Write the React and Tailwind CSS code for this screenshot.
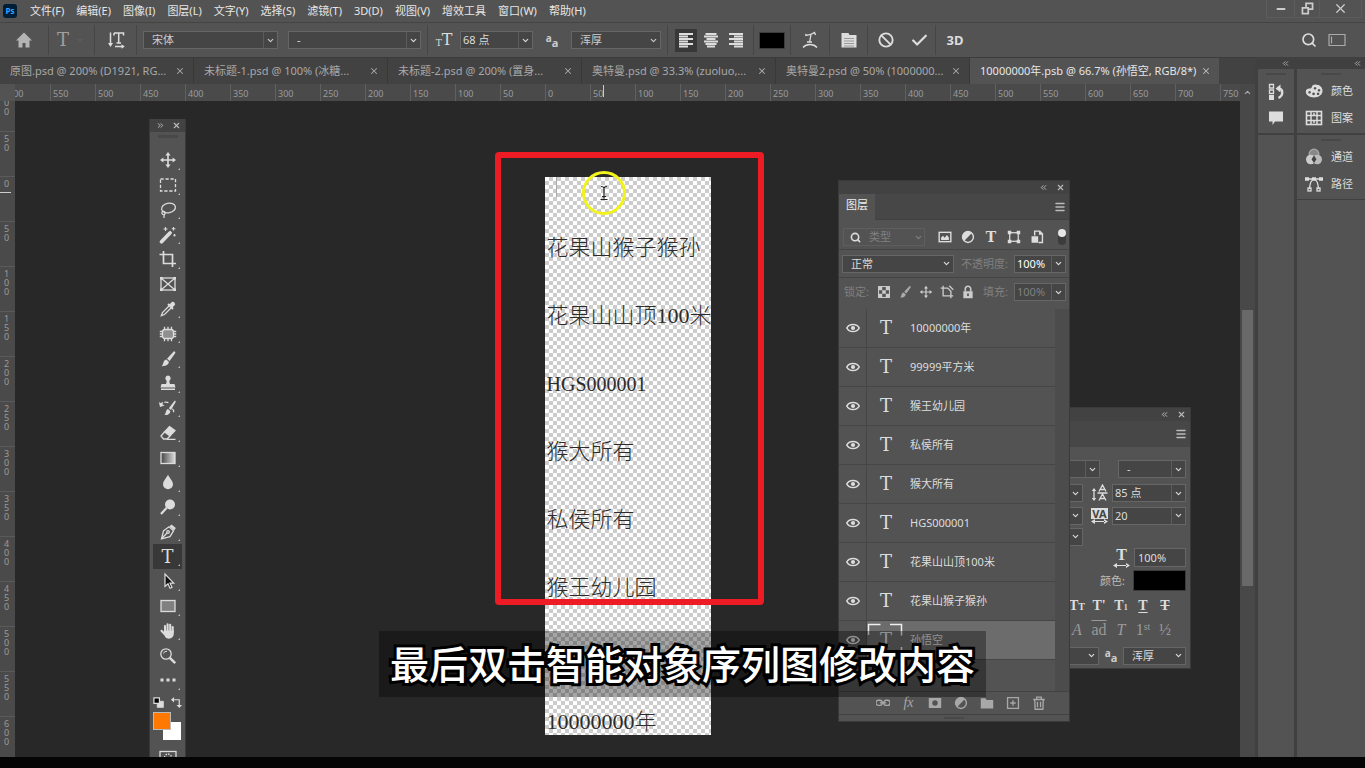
import { ChevronDown, ChevronUp, ChevronsLeft, ChevronsRight, X, Menu, Search, Check, Ban, Minus } from "lucide-react";

const menus = ["文件(F)", "编辑(E)", "图像(I)", "图层(L)", "文字(Y)", "选择(S)", "滤镜(T)", "3D(D)", "视图(V)", "增效工具", "窗口(W)", "帮助(H)"];

const tabs = [
  "原图.psd @ 200% (D1921, RG...",
  "未标题-1.psd @ 100% (冰糖...",
  "未标题-2.psd @ 200% (置身...",
  "奥特曼.psd @ 33.3% (zuoluo,...",
  "奥特曼2.psd @ 50% (1000000...",
];

const topTicks = [600, 550, 500, 450, 400, 350, 300, 250, 200, 150, 100, 50, 0, 50, 100, 150, 200, 250, 300, 350, 400, 450, 500, 550, 600, 650, 700, 750];
const sideTicks = ["100", "50", "0", "50", "100", "150", "200", "250", "300", "350", "400", "450", "500", "550", "600"];

const artText = ["花果山猴子猴孙", "花果山山顶100米", "HGS000001", "猴大所有", "私侯所有", "猴王幼儿园"];

const layers = ["10000000年", "99999平方米", "猴王幼儿园", "私侯所有", "猴大所有", "HGS000001", "花果山山顶100米", "花果山猴子猴孙", "孙悟空"];

function Svg({ size = 18, className = "", children }) {
  return (
    <svg width={size} height={size} viewBox="0 0 18 18" fill="none" stroke="currentColor" strokeWidth="1.3" className={`shrink-0 ${className}`} aria-hidden="true">
      {children}
    </svg>
  );
}

function Serif({ className = "", children }) {
  return <span className={`font-['Liberation_Serif',serif] font-bold leading-none ${className}`}>{children}</span>;
}

// Type tool mark, a slab letter
function TypeMark({ className = "" }) {
  return <span className={`font-['DejaVu_Serif',serif] leading-none ${className}`}>T</span>;
}

const MoveIcon = ({ size }) => (
  <Svg size={size}>
    <path d="M9 3v12M3 9h12" strokeWidth="1.6" />
    <path d="M9 1l2.6 3.4H6.4zM9 17l2.6-3.4H6.4zM1 9l3.4-2.6v5.2zM17 9l-3.4-2.6v5.2z" fill="currentColor" stroke="none" />
  </Svg>
);

const BrushIcon = ({ size }) => (
  <Svg size={size}>
    <path d="M15.6 1.4c1 .6.9 1.2.4 2L10.6 11 8 8.8l6-6.6c.6-.8 1-1.1 1.6-.8z" fill="currentColor" stroke="none" />
    <path d="M7.3 9.6l2.5 2.200c.2 2.500-2.600 4.600-7.300 4.400 1.800-1.200 1.400-2.800 2.200-4.400.6-1.300 1.500-2 2.600-2.200z" fill="currentColor" stroke="none" />
  </Svg>
);

const tools = [
  { name: "移动工具", icon: <MoveIcon /> },
  { name: "矩形选框工具", icon: <Svg><rect x="1.5" y="3" width="15" height="12" strokeDasharray="3.2 1.8" /></Svg> },
  { name: "套索工具", icon: <Svg><ellipse cx="9.5" cy="7" rx="7" ry="4.8" transform="rotate(-12 9.5 7)" /><circle cx="4.5" cy="12" r="1.6" /><path d="M5 13.5c.6 1 .4 2-.4 3.3" /></Svg> },
  { name: "魔棒工具", icon: <Svg><path d="M2.5 15.8l8.2-8.6" strokeWidth="3.6" strokeLinecap="round" /><path d="M11 6.8l1.2-1.2" strokeWidth="2.6" /><path d="M6.5 1v4M4.500 3h4M14.500 1v3.600M12.800 2.800h3.600M15.500 8v2.400M14.300 9.200h2.400" strokeWidth="1.1" /></Svg> },
  { name: "裁剪工具", icon: <Svg><path d="M4.5 1v12.500H17M0.500 4.500h13V17" strokeWidth="1.7" /></Svg> },
  { name: "图框工具", noMore: true, icon: <Svg><rect x="2" y="3" width="14" height="12" /><path d="M2 3l14 12M16 3L2 15" /><path d="M1 2h2.500v2.500H1zM14.500 2H17v2.500h-2.500zM1 13.500h2.500V16H1zM14.500 13.500H17V16h-2.500z" fill="currentColor" stroke="none" /></Svg> },
  { name: "吸管工具", icon: <Svg><path d="M10 6L3.500 12.500 2.300 15.700l3.200-1.200L12 8" /><path d="M8.300 4.700l5 5 1.400-1.400-1-1 2.200-2.300c1-1-1.500-4-3-2.900l-2.300 2.200-.9-1z" fill="currentColor" stroke="none" /></Svg> },
  { name: "修复工具", icon: <Svg><rect x="3.5" y="4.5" width="11" height="9" rx="2.5" fill="#8f8f8f" /><path d="M5.500 4V1.800M9 4V1.800M12.500 4V1.800M5.500 14v2.200M9 14v2.200M12.500 14v2.200M3 6.500H.8M3 9H.8M3 11.500H.8M15 6.500h2.200M15 9h2.200M15 11.500h2.200" /></Svg> },
  { name: "画笔工具", icon: <BrushIcon /> },
  { name: "仿制图章工具", icon: <Svg><path d="M9 1.500a2.800 2.800 0 0 1 1.600 5c-.5.600-.1 2.500.4 3.500h4.500l1 3.500h-15l1-3.500H7c.5-1 .9-2.900.4-3.500A2.800 2.800 0 0 1 9 1.500zM2 14.500h14V16H2z" fill="currentColor" stroke="none" /></Svg> },
  { name: "历史记录画笔工具", icon: <Svg><path d="M16 1.500c.9.500.8 1.200.4 1.900L12 11 9.800 9.300 15 2.500zM9 10l2.300 1.900c.1 2.400-2 4.300-6 4.200 1.500-1 1.200-2.500 1.900-4C7.700 10.800 8 10.200 9 10z" fill="currentColor" stroke="none" /><path d="M1 6c1.500-2.500 5-3.500 9-2.300M13 10c2 .6 2 2.500 1 4" strokeDasharray="4 1.3" /><path d="M0 3l1 5 4.500-1.500z" fill="currentColor" stroke="none" /></Svg> },
  { name: "橡皮擦工具", icon: <Svg><path d="M10.500 2.500l5.500 4-5 5.500-5.500-4z" fill="currentColor" /><path d="M5.500 8L2 12l2.500 3H8l3-3M8 15.300h8.500" /></Svg> },
  { name: "渐变工具", icon: <Svg><defs><linearGradient id="grad"><stop offset="0" stopColor="#444" /><stop offset="1" stopColor="#ddd" /></linearGradient></defs><rect x="2" y="3.5" width="14" height="11" fill="url(#grad)" /></Svg> },
  { name: "模糊工具", icon: <Svg><path d="M9 1.500c1 3 5 6.500 5 9.800a5 5 0 0 1-10 0C4 8 8 4.500 9 1.500z" fill="currentColor" stroke="none" /></Svg> },
  { name: "减淡工具", icon: <Svg><circle cx="11" cy="6.5" r="5" fill="currentColor" stroke="none" /><path d="M7.500 10l-5.500 6" strokeWidth="2.2" /></Svg> },
  { name: "钢笔工具", icon: <Svg><path d="M2.500 15.800l2-8 5.500-4 4.500 4-3.500 5.800z" /><path d="M2.500 15.800l5.800-6" /><circle cx="9" cy="9" r="1.3" /><path d="M10.500 3.300l2-1.800L16.800 5l-1.600 2.400z" fill="currentColor" stroke="none" /></Svg> },
  { name: "横排文字工具", active: true, icon: <TypeMark className="text-lg" /> },
  { name: "路径选择工具", icon: <Svg><path d="M6 2v12.500l3-2.700 2 4.500 2-.9-2-4.300h3.700z" fill="#111" strokeWidth="1.2" /></Svg> },
  { name: "矩形工具", icon: <Svg><rect x="2" y="3.5" width="14" height="11" fill="#808080" /></Svg> },
  { name: "抓手工具", icon: <Svg><path d="M6 10V4M8.600 9V2.300M11.200 9V2.800M13.700 10V5M5.500 12L2.500 8.800" strokeWidth="2.1" strokeLinecap="round" /><path d="M4.200 10.500L6 8.500h8.800v3c0 3-2 5.200-5 5.200-2.800 0-4-1.800-5.600-6.200z" fill="currentColor" stroke="none" /></Svg> },
  { name: "缩放工具", noMore: true, icon: <Svg><circle cx="7" cy="7" r="5.2" /><path d="M10.800 10.800l5.400 5.400" strokeWidth="2.4" /><path d="M4.500 6.500A3 3 0 0 1 8 4.300" strokeWidth="1" /></Svg> },
  { name: "编辑工具栏", icon: <Svg><path d="M1.500 7.500h3v3h-3zM7.500 7.500h3v3h-3zM13.500 7.500h3v3h-3z" fill="currentColor" stroke="none" /></Svg> },
];

function Select({ label, value, className = "", split, disabled }) {
  return (
    <span className={`relative flex h-[18px] shrink-0 items-center border border-[#666] bg-[#454545] ${className}`}>
      <select aria-label={label} disabled={disabled} className="h-full w-full appearance-none bg-transparent pl-2 text-inherit outline-none">
        <option>{value}</option>
      </select>
      <span className={`pointer-events-none absolute inset-y-0 right-0 flex w-[14px] items-center justify-center ${split ? "border-l border-[#5c5c5c]" : ""}`}>
        <ChevronDown size={9} strokeWidth={3} />
      </span>
    </span>
  );
}

// Text field with a drop-down arrow next to it
function Combo({ label, value, className = "", disabled }) {
  return (
    <span className={`flex h-[18px] shrink-0 border border-[#666] bg-[#454545] ${className}`}>
      <input aria-label={label} defaultValue={value} disabled={disabled} className="w-0 flex-1 bg-transparent pl-[2px] outline-none" />
      <button aria-label={`${label}选项`} className="flex w-[14px] items-center justify-center border-l border-[#5c5c5c] text-[#ddd]">
        <ChevronDown size={9} strokeWidth={3} />
      </button>
    </span>
  );
}

const Sep = ({ className = "" }) => <span className={`h-[30px] w-px shrink-0 bg-[#454545] ${className}`} />;

const AntiAlias = () => (
  <span className="flex font-bold leading-none text-[#ccc]">
    <span className="text-[10px]">a</span>
    <span className="pt-1 text-[11px]">a</span>
  </span>
);

function AlignIcon({ d }) {
  return <Svg size={18}><path d={d} strokeWidth="1.8" /></Svg>;
}

function MenuBar() {
  return (
    <header className="flex h-[23px] shrink-0 items-center border-b border-[#444] text-[#e6e6e6]">
      <svg width="14" height="14" viewBox="0 0 14 14" className="ml-[3px] mr-[13px] shrink-0" aria-label="Ps">
        <rect width="14" height="14" rx="3" fill="#001e36" />
        <text x="7" y="10" textAnchor="middle" fontSize="8" fontWeight="bold" fontFamily="Open Sans" fill="#31a8ff">Ps</text>
      </svg>
      <nav className="flex flex-1 gap-3 whitespace-nowrap">
        {menus.map((m) => <button key={m}>{m}</button>)}
      </nav>
      <div className="mr-[3px] flex h-[18px] self-start border-b border-[#5c5c5c] text-[#ccc]">
        <button aria-label="最小化" className="flex w-7 items-center justify-center border-l border-[#5c5c5c]"><Minus size={12} strokeWidth={4} /></button>
        <button aria-label="还原" className="flex w-[25px] items-center justify-center border-l border-[#5c5c5c]">
          <Svg size={13}><path d="M2 8h8v8H2zM7 7V2h9v8h-5" strokeWidth="2.4" /></Svg>
        </button>
        <button aria-label="关闭" className="flex w-[43px] items-center justify-center border-x border-[#5c5c5c]"><X size={15} /></button>
      </div>
    </header>
  );
}

function OptionsBar() {
  return (
    <div className="flex h-[34px] shrink-0 items-center text-[#ddd]">
      <button aria-label="主页" className="flex w-12 justify-center text-[#b4b4b4]">
        <Svg><path d="M9 1.500L17 9.500h-2.500V16.500h-4v-4.500h-3v4.500h-4V9.500H1z" fill="currentColor" stroke="none" /></Svg>
      </button>
      <Sep />
      <button aria-label="文字工具预设" className="flex w-[45px] items-center gap-2 pl-2 text-[#a0a0a0]">
        <TypeMark className="text-lg" /><ChevronDown size={6} className="text-[#777]" />
      </button>
      <Sep />
      <button aria-label="切换文本取向" className="flex w-[41px] justify-center">
        <Svg><path d="M3.500 1.500V14M7 2h9.500v2.500M7 4.500V2M11.700 2v10M9.500 12h4.500M8 15.500h8" strokeWidth="1.5" /><path d="M1 12h5l-2.500 4zM14.500 13.300l3.300 2.200-3.300 2.200z" fill="currentColor" stroke="none" /></Svg>
      </button>
      <Sep />
      <Select label="字体" value="宋体" split className="ml-[6px] w-[135px] -indent-[6px] text-[#ccc]" />
      <Select label="字体样式" value="-" split className="ml-[10px] w-[133px] -indent-[3px]" />
      <Sep className="ml-[6px]" />
      <span className="flex w-[32px] items-end justify-center text-[#ddd]"><TypeMark className="text-[9px]" /><TypeMark className="text-base" /></span>
      <Combo label="字体大小" value="68 点" className="w-[73px]" />
      <span className="flex w-[38px] justify-center"><AntiAlias /></span>
      <Select label="消除锯齿" value="浑厚" className="w-[90px] text-[#ccc]" />
      <Sep className="ml-[6px]" />
      <button aria-label="左对齐" aria-pressed="true" className="ml-[7px] mr-px flex h-[23px] w-[22px] items-center justify-center bg-[#383838]">
        <AlignIcon d="M2 3h14M2 5.500h9M2 8h14M2 10.500h9M2 13h14M2 15.500h9" />
      </button>
      <button aria-label="居中对齐" className="flex w-[25px] justify-center"><AlignIcon d="M3.500 3h11M2 5.500h14M4.500 8h9M2 10.500h14M3.500 13h11M5 15.500h8" /></button>
      <button aria-label="右对齐" className="flex w-[25px] justify-center"><AlignIcon d="M2 3h14M7 5.500h9M2 8h14M7 10.500h9M2 13h14M7 15.500h9" /></button>
      <Sep className="ml-[5px]" />
      <button aria-label="文本颜色" className="mx-[5px] h-[17px] w-[26px] border border-[#3c3c3c] bg-black" />
      <Sep />
      <button aria-label="变形文字" className="flex w-[38px] justify-center">
        <Svg><path d="M4.500 4.500c4 0 6-1 9-3l1 2.500M4.500 4.500l.5-1.500M10 3.500l-1.500 8M6 11h5M2 16.500c3.500-4 10.500-4 14 0" /></Svg>
      </button>
      <Sep />
      <button aria-label="字符和段落面板" className="flex w-[37px] justify-center">
        <Svg><path d="M1.500 2h7l1 2h7v12.500h-15z" fill="currentColor" stroke="none" /><path d="M4 7.500h10M4 10h10M4 12.500h10M4 15h10" stroke="#999" strokeWidth="1" /></Svg>
      </button>
      <Sep />
      <button aria-label="取消" className="flex w-[36px] justify-center"><Ban size={16} strokeWidth={2.8} /></button>
      <button aria-label="提交" className="flex w-[31px] justify-center"><Check size={19} strokeWidth={2.8} /></button>
      <Sep />
      <button className="w-[38px] text-[13px] font-bold leading-none">3D</button>
      <span className="flex-1" />
      <button aria-label="搜索" className="mr-[11px]"><Search size={16} strokeWidth={2.5} /></button>
      <button aria-label="工作区" className="mr-[19px] text-[#aaa]"><Svg><path d="M1 3.500h16v11H1zM3.500 5.500v7" strokeWidth="1.2" /></Svg></button>
    </div>
  );
}

function TabBar() {
  return (
    <div role="tablist" className="flex h-[27px] shrink-0 overflow-hidden border-t border-[#3c3c3c] bg-[#424242] text-[#a8a8a8]">
      {tabs.map((t) => (
        <div key={t} role="tab" className="flex w-[194px] shrink-0 items-center justify-between border-r border-[#383838] pl-[10px] pr-2 whitespace-nowrap">
          <span>{t}</span>
          <button aria-label="关闭标签"><X size={10} strokeWidth={2.5} /></button>
        </div>
      ))}
      <div role="tab" aria-selected="true" className="flex shrink-0 items-center gap-[5px] bg-[#535353] pl-[10px] pr-2 whitespace-nowrap text-[#e6e6e6]">
        <span>10000000年.psb @ 66.7% (孙悟空, RGB/8*)</span>
        <button aria-label="关闭标签" className="text-[#bbb]"><X size={10} strokeWidth={2.5} /></button>
      </div>
    </div>
  );
}

function TopRuler() {
  return (
    <div className="relative flex h-[17px] shrink-0 overflow-hidden bg-[#4a4a4a] pl-[5px] text-[9px] leading-[20px] text-[#9a9a9a]">
      {topTicks.map((t, i) => (
        <span key={i} className="w-[45px] shrink-0 border-l border-[#606060] pl-[2px]">{t}</span>
      ))}
      <span className="absolute left-0 top-0 h-full w-[15px] bg-[#535353]" />
      <span className="absolute left-[603px] top-[1px] h-3 w-px bg-[#ccc]" />
    </div>
  );
}

function SideRuler() {
  return (
    <div className="relative w-[15px] shrink-0 overflow-hidden bg-[#4a4a4a] text-[9px] leading-[9px] text-[#9a9a9a]">
      <div className="-mt-[15px] flex flex-col">
        {sideTicks.map((t, i) => (
          <span key={i} className="flex h-[45px] shrink-0 flex-col items-center border-t border-[#5a5a5a] pt-[2px] pr-[2px]">
            {t.split("").map((c, j) => <span key={j}>{c}</span>)}
          </span>
        ))}
      </div>
      <span className="absolute left-0 top-[91px] h-px w-[11px] bg-[#ccc]" />
    </div>
  );
}

function Toolbox() {
  return (
    <aside className="absolute bottom-0 left-[134px] top-[18px] w-[37px] overflow-hidden border-x border-[#3a3a3a] bg-[#535353] text-[#dcdcdc]">
      <div className="flex h-[13px] items-center justify-between bg-[#424242] pl-[6px] pr-1 text-[#bbb]">
        <ChevronsRight size={9} strokeWidth={2.5} />
        <button aria-label="关闭工具栏"><X size={9} strokeWidth={3} /></button>
      </div>
      <div className="mx-auto mt-[3px] mb-[10px] h-[3px] w-5 bg-[#484848]" />
      <div className="flex h-[545px] flex-col">
        {tools.map((t) => (
          <button key={t.name} aria-label={t.name} className={`relative mx-[3px] flex flex-1 items-center justify-center ${t.active ? "bg-[#383838]" : ""}`}>
            {t.icon}
            {!t.noMore && <span className="absolute bottom-[3px] right-[2px] border-[1px] border-[#bbb] border-l-transparent border-t-transparent" />}
          </button>
        ))}
      </div>
      <div className="flex justify-between px-[3px] pt-1">
        <button aria-label="默认颜色">
          <Svg size={11}><path d="M7 7h10v10H7z" fill="#ddd" /><path d="M1.500 1.500h9v9h-9z" fill="#000" strokeWidth="2" /></Svg>
        </button>
        <button aria-label="切换颜色">
          <Svg size={11}><path d="M3 4.500h10.500V14" strokeWidth="2" /><path d="M0 4.500L5 0v9zM13.500 18L9 13h9z" fill="currentColor" stroke="none" /></Svg>
        </button>
      </div>
      <div className="relative mt-1 h-7">
        <button aria-label="背景色" className="absolute left-[13px] top-[10px] h-[18px] w-[18px] bg-white" />
        <button aria-label="前景色" className="absolute left-[3px] top-0 h-[18px] w-[18px] border border-[#bbb] bg-[#ff7800]" />
      </div>
      <button aria-label="快速蒙版" className="mx-auto mt-[9px] block">
        <Svg><rect x="1" y="2.5" width="16" height="12" /><circle cx="9" cy="8.5" r="3.5" strokeDasharray="1.5 1.2" /></Svg>
      </button>
    </aside>
  );
}

function ArtLine({ text }) {
  const latin = /^[A-Z]/.test(text);
  return (
    <p className={`flex h-[68px] items-center whitespace-nowrap pl-[2px] font-['Liberation_Serif','Noto_Sans_CJK_SC',serif] font-light text-[#2c2c2c] ${latin ? "text-[20px]" : "text-[22px]"}`}>
      {text}
    </p>
  );
}

function Artboard() {
  return (
    <div className="relative mx-auto mt-[76px] flex h-[558px] w-[166px] flex-col bg-[repeating-conic-gradient(#cccccc_0_25%,#ffffff_0_50%)] bg-[length:8px_8px] pt-[37px]">
      {artText.map((t) => <ArtLine key={t} text={t} />)}
      <div className="mt-auto -mb-[21px]"><ArtLine text="10000000年" /></div>
      <span className="absolute left-[11px] top-0 h-5 w-px bg-[#aaa]" />
      <div className="absolute -left-[50px] -top-[25px] h-[453px] w-[269px] rounded-[4px] border-[6px] border-[#ed1c24]" />
      <div className="absolute left-[37px] -top-[6px] flex h-11 w-11 items-center justify-center rounded-full border-[3px] border-[#f2f21c] text-[#222]">
        <Svg size={18}><path d="M6 2.500c2 0 3 .5 3 2 0-1.500 1-2 3-2M9 4v10.500M5.500 15.500h7M7 12.500h4" strokeWidth="1.2" /></Svg>
      </div>
    </div>
  );
}

function PanelHead() {
  return (
    <div className="flex h-[13px] items-center justify-end gap-2 bg-[#424242] pr-1 text-[#bbb]">
      <ChevronsLeft size={9} strokeWidth={2.5} />
      <button aria-label="关闭面板"><X size={9} strokeWidth={3} /></button>
    </div>
  );
}

const PanelMenu = () => (
  <button aria-label="面板菜单" className="mr-[3px] text-[#bbb]"><Menu size={12} strokeWidth={3} /></button>
);

const WidthArrow = () => (
  <svg width="17" height="5" viewBox="0 0 17 5" fill="#ddd"><path d="M0 2.500L4 0v5zM17 2.500L13 0v5zM3 2h11v1H3z" /></svg>
);

function CharacterPanel() {
  return (
    <section aria-label="字符" className="absolute left-[1025px] top-[306px] w-[151px] border border-[#3a3a3a] bg-[#535353] text-[#ddd]">
      <PanelHead />
      <div className="flex h-[26px] items-center justify-end bg-[#474747]"><PanelMenu /></div>
      <div className="pr-1">
        <div className="mt-[10px] flex h-6 items-center justify-end gap-[18px]">
          <Select label="字体系列" value="" split className="w-[52px]" />
          <Select label="样式" value="-" split className="w-[68px] -indent-1" />
        </div>
        <div className="flex h-6 items-center justify-end">
          <Combo label="大小" value="" className="w-9" />
          <span className="flex w-[29px] justify-center pl-1">
            <Svg><path d="M3 6v9M8 7.500L11.500 1 15 7.500M9 5.500h5M6.500 9h10M8 16.500l3.500-6.500 3.500 6.500M9 14.500h5" /><path d="M.8 7L3 4l2.200 3zM.8 14L3 17l2.200-3z" fill="currentColor" stroke="none" /></Svg>
          </span>
          <Combo label="行距" value="85 点" className="w-[74px]" />
        </div>
        <div className="flex h-[21px] items-center justify-end">
          <Combo label="字距微调" value="" className="w-9" />
          <span className="flex w-[29px] flex-col items-center pl-1">
            <span className="w-[17px] bg-[#ddd] text-center text-[11px] font-bold leading-[11px] text-[#444]">VA</span>
            <WidthArrow />
          </span>
          <Combo label="字距" value="20" className="w-[74px]" />
        </div>
        <div className="flex h-[21px] items-center justify-end pr-[103px]">
          <Combo label="比例间距" value="" className="w-9" />
        </div>
        <div className="flex h-[21px] items-center justify-end gap-1">
          <span className="flex flex-col items-center">
            <Serif className="text-base">T</Serif>
            <WidthArrow />
          </span>
          <input aria-label="水平缩放" defaultValue="100%" className="h-[19px] w-[52px] border border-[#666] bg-[#454545] pl-[3px] outline-none" />
        </div>
        <div className="flex h-[25px] items-center justify-end gap-2">
          <span className="text-[#bbb]">颜色:</span>
          <button aria-label="颜色" className="h-[21px] w-[53px] border border-[#3c3c3c] bg-black" />
        </div>
        <div className="flex h-[25px] items-center justify-end pr-[10px]">
          <button className="w-[22px]"><Serif className="text-sm">T<span className="text-[10px]">T</span></Serif></button>
          <button className="w-[22px]"><Serif className="text-sm">T'</Serif></button>
          <button className="w-[22px]"><Serif className="text-sm">T<span className="text-[8px]">1</span></Serif></button>
          <button className="w-[22px]"><Serif className="text-sm underline underline-offset-2">T</Serif></button>
          <button className="w-[22px]"><Serif className="text-sm line-through">T</Serif></button>
        </div>
        <div className="flex h-[25px] items-center justify-end pr-[10px] text-[#999]">
          <button className="w-[22px]"><Serif className="text-base font-normal italic">A</Serif></button>
          <button className="w-[22px]"><Serif className="text-base font-normal overline">ad</Serif></button>
          <button className="w-[22px]"><Serif className="text-base font-normal italic">T</Serif></button>
          <button className="w-[22px]"><Serif className="text-base font-normal">1<sup className="text-[10px]">st</sup></Serif></button>
          <button className="w-[22px]"><Serif className="text-base font-normal">½</Serif></button>
        </div>
        <div className="flex h-[25px] items-center justify-end">
          <Select label="语言" value="" className="w-14" />
          <span className="flex w-6 justify-center"><AntiAlias /></span>
          <Select label="消除锯齿方法" value="浑厚" className="w-[63px] -indent-[2px]" />
        </div>
      </div>
    </section>
  );
}

const AdjustIcon = ({ size = 14 }) => (
  <Svg size={size}><circle cx="9" cy="9" r="7" strokeWidth="1.8" /><path d="M14 4A7 7 0 1 0 4 14z" fill="currentColor" stroke="none" /></Svg>
);

function LayersPanel() {
  return (
    <section aria-label="图层" className="absolute left-[823px] top-[79px] w-[232px] border border-[#3a3a3a] bg-[#535353] text-[#ddd]">
      <PanelHead />
      <div className="flex h-[26px] items-center justify-between border-b border-[#404040] bg-[#474747]">
        <button className="h-[26px] bg-[#535353] px-[7px] pb-1 text-[#eee]">图层</button>
        <PanelMenu />
      </div>
      <div className="flex h-[30px] items-center border-b border-[#444] pt-[5px]">
        <span className="ml-1 flex h-[18px] w-[82px] items-center border border-[#5e5e5e] pl-[6px] text-[#808080]">
          <Search size={11} strokeWidth={3.5} className="shrink-0 text-[#ddd]" />
          <Select label="类型" value="类型" className="h-4 w-16 border-0 bg-transparent -indent-1" />
        </span>
        <span className="ml-[13px] flex flex-1 items-center gap-[9px]">
          <button aria-label="像素图层"><Svg size={14}><rect x="1.5" y="3" width="15" height="12" strokeWidth="1.8" /><path d="M4 13V9.500l2.500-2 2 2.500 3-3.500L14 9.500V13z" fill="currentColor" stroke="none" /></Svg></button>
          <button aria-label="调整图层"><AdjustIcon /></button>
          <button aria-label="文字图层" className="flex w-[14px] justify-center"><TypeMark className="text-sm font-bold" /></button>
          <button aria-label="形状图层"><Svg size={14}><rect x="3.5" y="3.5" width="11" height="11" strokeWidth="1.6" /><path d="M1 1h4.500v4.500H1zM12.500 1H17v4.500h-4.500zM1 12.500h4.500V17H1zM12.500 12.500H17V17h-4.500z" fill="currentColor" stroke="none" /></Svg></button>
          <button aria-label="智能对象"><Svg size={14}><path d="M6 7V1.500h6.500l3.500 3.500v11h-5" strokeWidth="1.8" /><path d="M2 8h8.500v8.500H2zM11.500 1v5H16z" fill="currentColor" stroke="none" /></Svg></button>
        </span>
        <button aria-label="过滤开关" className="mr-[3px] flex h-4 w-2 items-start rounded-full bg-[#3c3c3c]"><span className="h-2 w-2 rounded-full bg-[#e6e6e6]" /></button>
      </div>
      <div className="flex h-7 items-center border-b border-[#444] pl-[3px]">
        <Select label="混合模式" value="正常" className="w-[112px]" />
        <span className="ml-auto mr-[6px] whitespace-nowrap text-[#808080]">不透明度:</span>
        <Combo label="不透明度" value="100%" className="mr-[3px] w-[52px] text-white" />
      </div>
      <div className="flex h-[31px] items-center pb-[3px] pl-[5px] text-[#808080]">
        锁定:
        <span className="ml-2 flex flex-1 items-center gap-[7px] text-[#ccc]">
          <button aria-label="锁定透明像素"><Svg size={14}><rect x="2" y="2" width="14" height="14" /><path d="M2 2h4.700v4.700H2zM11.300 2H16v4.700h-4.700zM6.700 6.700h4.600v4.600H6.700zM2 11.300h4.700V16H2zM11.300 11.300H16V16h-4.700z" fill="currentColor" stroke="none" /></Svg></button>
          <button aria-label="锁定图像像素" className="text-[#aaa]"><BrushIcon size={14} /></button>
          <button aria-label="锁定位置"><MoveIcon size={14} /></button>
          <button aria-label="锁定嵌套"><Svg size={14}><path d="M4 1v13h13M1 4h9l4 4v9M12 1l5 5" strokeWidth="1.7" /></Svg></button>
          <button aria-label="锁定全部"><Svg size={14}><path d="M3 8h12v9H3z" fill="currentColor" stroke="none" /><path d="M5.500 8V5a3.500 3.500 0 0 1 7 0v3" strokeWidth="2" /><path d="M9 11v3" stroke="#444" strokeWidth="2" /></Svg></button>
        </span>
        填充:
        <Combo label="填充" value="100%" disabled className="ml-[6px] mr-[3px] w-[52px]" />
      </div>
      <div className="flex h-[382px] bg-[#4c4c4c]">
        <ul className="w-[216px] bg-[#535353]">
          {layers.map((name, i) => {
            const selected = i === layers.length - 1;
            return (
              <li key={name} className="flex h-[39px] items-center border-b border-[#464646]">
                <button aria-label={`显示 ${name}`} className="flex h-full w-7 items-center justify-center border-r border-[#464646]">
                  <Svg size={14}><path d="M1 9c3-6 13-6 16 0-3 6-13 6-16 0z" strokeWidth="2" /><circle cx="9" cy="9" r="2.7" fill="currentColor" stroke="none" /></Svg>
                </button>
                <button className={`flex h-full flex-1 items-center text-left ${selected ? "bg-[#6c6c6c]" : ""}`}>
                  <span className="relative flex h-9 w-[38px] items-center justify-center">
                    <TypeMark className="text-lg" />
                    {selected && (
                      <svg width="36" height="36" viewBox="0 0 36 36" fill="none" stroke="#eee" strokeWidth="1.5" className="absolute inset-0">
                        <path d="M1.500 13V2.500h12M23 2.500h11.500v11M34.500 25v9H23M13 34H1.500v-9" />
                      </svg>
                    )}
                  </span>
                  <span className="pl-[5px]">{name}</span>
                </button>
              </li>
            );
          })}
        </ul>
      </div>
      <div className="flex h-6 items-center justify-center gap-3 border-y border-[#424242] pl-[13px] text-[#a8a8a8]">
        <button aria-label="链接图层"><Svg size={14}><rect x="0" y="5.5" width="8" height="6.5" rx="3" strokeWidth="1.7" /><rect x="10" y="5.5" width="8" height="6.5" rx="3" strokeWidth="1.7" /><path d="M5 8.800h8" strokeWidth="1.7" /></Svg></button>
        <button aria-label="图层样式" className="w-[14px]"><Serif className="text-sm font-normal italic">fx</Serif></button>
        <button aria-label="添加蒙版"><Svg size={14}><path d="M1 2.500h16v13H1zM9 5.500a3.500 3.500 0 1 0 0 7 3.500 3.500 0 0 0 0-7z" fill="currentColor" fillRule="evenodd" stroke="none" /></Svg></button>
        <button aria-label="新建调整图层"><AdjustIcon /></button>
        <button aria-label="新建组"><Svg size={14}><path d="M1 3h6l1.500 2H17v11H1z" fill="currentColor" stroke="none" /></Svg></button>
        <button aria-label="新建图层"><Svg size={14}><path d="M2 2h14v14H2zM9 5.500v7M5.500 9h7" strokeWidth="1.7" /></Svg></button>
        <button aria-label="删除图层"><Svg size={14}><path d="M1.500 4.500h15M6 4V1.500h6V4M3.500 5l.5 12h10l.5-12M7 7.500v7M11 7.500v7" strokeWidth="1.7" /></Svg></button>
      </div>
      <div className="flex h-[6px] items-center justify-center"><span className="h-[2px] w-5 bg-[#484848]" /></div>
    </section>
  );
}

function DockItem({ label, children }) {
  return (
    <button className="flex h-[27px] w-full items-center gap-2 pl-2 text-[#ddd]">
      {children}
      {label}
    </button>
  );
}

const Grip = () => <div className="mx-auto mt-1 h-[2px] w-5 bg-[#484848]" />;

function Docks() {
  return (
    <div className="flex shrink-0 bg-[#404040] pl-[3px] text-[#ddd]">
      <aside className="flex w-[36px] flex-col">
        <div className="flex h-3 items-center justify-end pr-1 text-[#aaa]"><ChevronsLeft size={9} strokeWidth={2.5} /></div>
        <div className="mb-[2px] h-16 bg-[#535353]">
          <Grip />
          <div className="flex flex-col items-center pt-1">
            <button aria-label="历史记录" className="h-[26px]"><Svg><path d="M2.500 1.500h4v3.500h-4zM2.500 7h4v3.500h-4z" /><path d="M2 12h5v5H2zM8.500 5.500l5-4v8z" fill="currentColor" stroke="none" /><path d="M12 5.500c4.500.5 4.500 7-.5 9.500" strokeWidth="2.2" /></Svg></button>
            <button aria-label="注释" className="h-[26px]"><Svg><path d="M2 2.500h14v10H8L5.500 16v-3.500H2z" fill="currentColor" stroke="none" /></Svg></button>
          </div>
        </div>
        <div className="flex-1 bg-[#535353]" />
      </aside>
      <aside className="ml-[3px] flex w-[68px] flex-col">
        <div className="flex h-3 items-center justify-end pr-[3px] text-[#aaa]"><ChevronsLeft size={9} strokeWidth={2.5} /></div>
        <div className="mb-[2px] h-16 bg-[#535353]">
          <Grip />
          <div className="pt-[2px]">
            <DockItem label="颜色"><Svg><path d="M10 2.500c5 0 7.500 3 7.500 6.300 0 4-4 6.700-8.500 6.700S.8 13 .8 9.800C.8 7 3 6.200 5 6.500 7.500 7 6 2.500 10 2.500zM10 5a1.300 1.300 0 1 0 .1 0zM14 7a1.300 1.300 0 1 0 .1 0zM4.500 9a1.300 1.300 0 1 0 .1 0zM8.500 10.500a1.400 1.400 0 1 0 .1 0zM13 10.500a1.300 1.300 0 1 0 .1 0z" fill="currentColor" fillRule="evenodd" stroke="none" /></Svg></DockItem>
            <DockItem label="图案"><Svg><rect x="1.5" y="2.5" width="15" height="13" strokeWidth="1.6" /><path d="M1.500 6.500h15M1.500 11.500h15M6 2.500v13M12 2.500v13M9 4v3M9 11v3" strokeWidth="1.5" /></Svg></DockItem>
          </div>
        </div>
        <div className="mb-px h-16 bg-[#535353]">
          <Grip />
          <div className="pt-[2px]">
            <DockItem label="通道"><Svg><circle cx="9" cy="6" r="4.8" fill="#888" stroke="#aaa" /><circle cx="5.8" cy="11.5" r="4.8" fill="#ccc" stroke="none" /><circle cx="12.2" cy="11.5" r="4.8" fill="#bbb" stroke="none" /><path d="M9 7.500l2.500 3.800L9 15l-2.500-3.700z" fill="#444" stroke="none" /></Svg></DockItem>
            <DockItem label="路径"><Svg><path d="M2 4h14M9 4C5.500 5 4.800 9 4.500 14M9 4c3.500 1 4.200 5 4.500 10" /><path d="M0 2.200h4v3.600H0zM7 2.200h4v3.600H7zM14 2.200h4v3.600h-4z" fill="currentColor" stroke="none" /><rect x="3" y="13" width="3" height="3" /><rect x="12" y="13" width="3" height="3" /></Svg></DockItem>
          </div>
        </div>
        <div className="flex-1 bg-[#535353]" />
      </aside>
    </div>
  );
}

export default function App() {
  return (
    <div className="relative flex h-screen flex-col overflow-hidden bg-[#535353] font-['Noto_Sans','Noto_Sans_CJK_SC',sans-serif] text-[11px] leading-4">
      <MenuBar />
      <OptionsBar />
      <div className="flex min-h-0 flex-1">
        <main className="flex min-w-0 flex-1 flex-col">
          <TabBar />
          <div className="flex min-h-0 flex-1">
            <div className="flex min-w-0 flex-1 flex-col">
              <TopRuler />
              <div className="flex min-h-0 flex-1">
                <SideRuler />
                <div className="relative flex min-w-0 flex-1 flex-col overflow-hidden bg-[#282828]">
                  <Artboard />
                  <Toolbox />
                  <CharacterPanel />
                  <LayersPanel />
                </div>
              </div>
            </div>
            <div className="flex w-[15px] shrink-0 flex-col items-center bg-[#484848] pt-1 text-[#aaa]">
              <ChevronUp size={9} strokeWidth={3} />
              <div className="mt-[213px] h-[276px] w-[11px] bg-[#696969]" />
            </div>
          </div>
        </main>
        <Docks />
      </div>
      <footer className="h-[11px] shrink-0 bg-[#050505]" />

      {/* Subtitle */}
      <div className="pointer-events-none absolute inset-x-0 bottom-[71px] flex justify-center">
        <p className="bg-black/35 px-[11px] text-[39px] font-medium leading-[66px] whitespace-nowrap text-white [-webkit-text-stroke:6px_black] [paint-order:stroke_fill]">
          最后双击智能对象序列图修改内容
        </p>
      </div>
    </div>
  );
}
